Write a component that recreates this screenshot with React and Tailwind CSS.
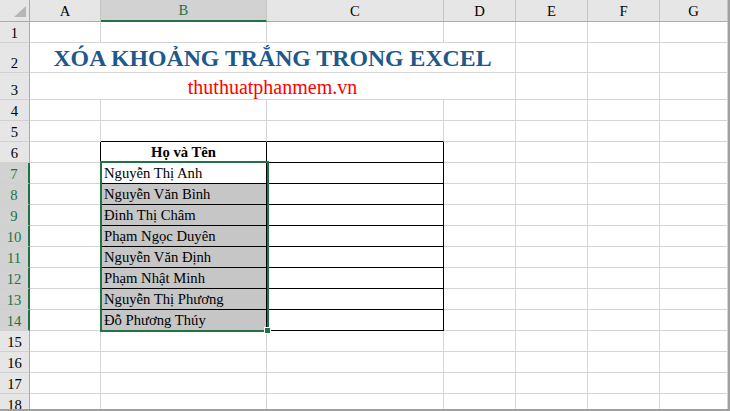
import React from "react";

const cols = [
  { key: "A", w: "w-[71px]" },
  { key: "B", w: "w-[166px]" },
  { key: "C", w: "w-[177px]" },
  { key: "D", w: "w-[72px]" },
  { key: "E", w: "w-[72px]" },
  { key: "F", w: "w-[72px]" },
  { key: "G", w: "w-[68px]" },
];

const rowHeights = {
  2: "h-[30px]",
  3: "h-[27px]",
};

const names = [
  "Nguyễn Thị Anh",
  "Nguyễn Văn Bình",
  "Đinh Thị Châm",
  "Phạm Ngọc Duyên",
  "Nguyễn Văn Định",
  "Phạm Nhật Minh",
  "Nguyễn Thị Phương",
  "Đỗ Phương Thúy",
];

const inTable = (r) => r >= 6 && r <= 14;

const RowHeader = ({ n }) => {
  const sel = n >= 7 && n <= 14;
  return (
    <div
      className={
        "w-[30px] shrink-0 flex items-end justify-center pb-[1px] leading-none border-b border-b-[#d0d0d0] " +
        (sel
          ? "bg-[#d2d2d2] text-[#217346] border-r-2 border-r-[#217346]"
          : "bg-[#e6e6e6] text-black border-r border-r-[#ababab]")
      }
    >
      {n}
    </div>
  );
};

const Cell = ({ r, c, children, className = "" }) => {
  const tb = (c === "B" || c === "C") && r >= 5 && r <= 14;
  const rb = inTable(r) && (c === "A" || c === "B" || c === "C");
  const w = cols.find((x) => x.key === c).w;
  return (
    <div
      className={
        w +
        " shrink-0 border-r border-b flex items-end leading-none " +
        (tb ? "border-b-black " : "border-b-[#d4d4d4] ") +
        (rb ? "border-r-black " : "border-r-[#d4d4d4] ") +
        className
      }
    >
      {children}
    </div>
  );
};

const Row = ({ n }) => {
  const h = rowHeights[n] || "h-[21px]";
  if (n === 2 || n === 3) {
    return (
      <div className={"flex " + h}>
        <RowHeader n={n} />
        <div className="w-[486px] shrink-0 border-r border-b border-r-[#d4d4d4] border-b-[#d4d4d4] flex items-end justify-center leading-none">
          {n === 2 ? (
            <span className="text-[23.8px] font-bold text-[#21588a] pb-[1px]">
              XÓA KHOẢNG TRẮNG TRONG EXCEL
            </span>
          ) : (
            <span className="text-[20px] text-[#ff0000] pb-[2px]">thuthuatphanmem.vn</span>
          )}
        </div>
        {["E", "F", "G"].map((c) => (
          <Cell key={c} r={n} c={c} />
        ))}
      </div>
    );
  }
  return (
    <div className={"flex " + h}>
      <RowHeader n={n} />
      {cols.map(({ key }) => {
        if (key === "B" && n === 6) {
          return (
            <Cell key={key} r={n} c={key} className="justify-center pb-[2px] font-bold">
              Họ và Tên
            </Cell>
          );
        }
        if (key === "B" && n >= 7 && n <= 14) {
          return (
            <Cell
              key={key}
              r={n}
              c={key}
              className={"pl-[3px] pb-[2px] " + (n === 7 ? "bg-white" : "bg-[#c6c6c6]")}
            >
              {names[n - 7]}
            </Cell>
          );
        }
        return <Cell key={key} r={n} c={key} />;
      })}
    </div>
  );
};

export default function App() {
  const rows = Array.from({ length: 18 }, (_, i) => i + 1);
  return (
    <div className="w-[730px] h-[411px] bg-white overflow-hidden font-['Liberation_Serif',serif] text-[14.67px] text-black">
      <div className="relative w-[730px] h-[411px] border-r-2 border-b-2 border-r-[#a0a0a0] border-b-[#a0a0a0] overflow-hidden">
        {/* column headers */}
        <div className="flex h-[22px]">
          <div className="w-[30px] shrink-0 bg-[#e6e6e6] border-r border-b border-r-[#ababab] border-b-[#ababab]">
            <svg width="29" height="21" viewBox="0 0 29 21">
              <polygon points="26,6 26,17 14,17" fill="#b6b6b6" />
            </svg>
          </div>
          {cols.map(({ key, w }) => (
            <div
              key={key}
              className={
                w +
                " shrink-0 flex items-end justify-center pb-[2px] leading-none border-r border-r-[#c4c4c4] " +
                (key === "B"
                  ? "bg-[#d2d2d2] text-[#217346] border-b-2 border-b-[#217346]"
                  : "bg-[#e6e6e6] border-b border-b-[#ababab]")
              }
            >
              {key}
            </div>
          ))}
        </div>
        {rows.map((n) => (
          <Row key={n} n={n} />
        ))}

        {/* selection B7:B14 */}
        <div className="absolute left-[100px] top-[161px] w-[169px] h-[171px] border-2 border-[#217346] pointer-events-none" />
        <div className="absolute left-[264px] top-[327px] w-[7px] h-[7px] bg-[#217346] border border-white" />
      </div>
    </div>
  );
}
